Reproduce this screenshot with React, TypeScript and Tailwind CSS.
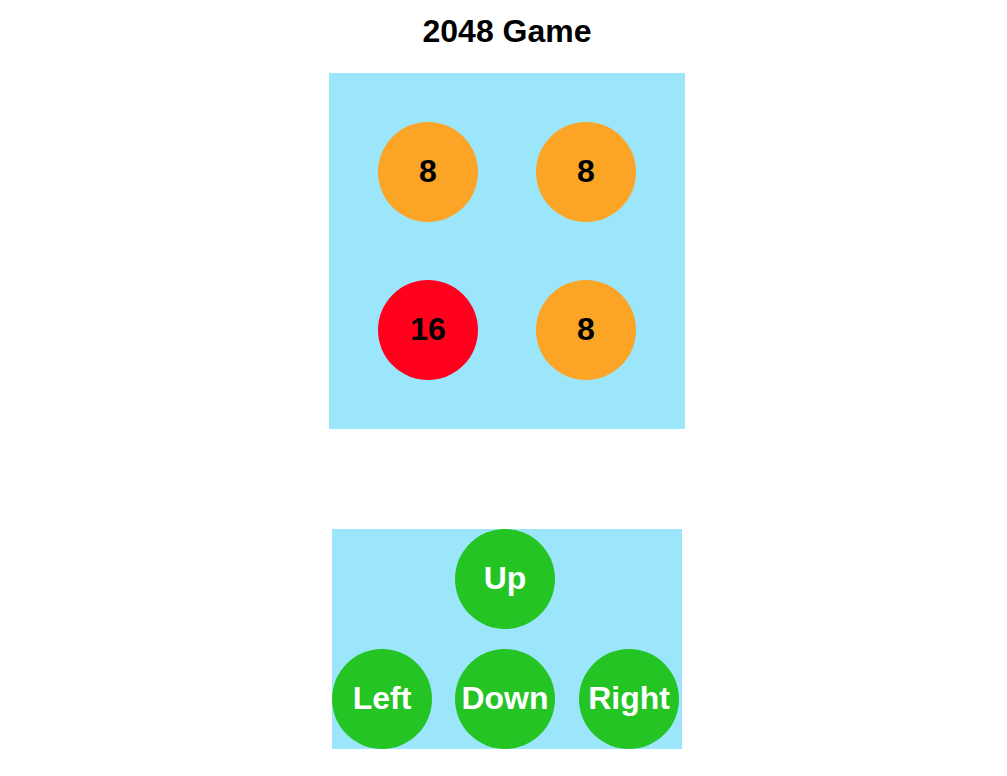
import React from "react";

const tiles = [
  { v: 8, c: "bg-[#fba426]" },
  { v: 8, c: "bg-[#fba426]" },
  { v: 16, c: "bg-[#ff001d]" },
  { v: 8, c: "bg-[#fba426]" },
];

function Btn({ label }: { label: string }) {
  return (
    <div className="w-[100px] h-[100px] rounded-full bg-[#23c423] flex items-center justify-center pb-[2px] text-white text-[32px] font-bold">
      {label}
    </div>
  );
}

export default function App() {
  return (
    <div
      className="w-[1007px] h-[776px] bg-white flex flex-col items-center pl-[7px]"
      style={{ fontFamily: '"Liberation Sans", Arial, sans-serif' }}
    >
      <h1 className="mt-[13px] h-[36px] leading-[36px] text-[32px] font-bold text-black">2048 Game</h1>
      <div className="mt-[24px] w-[356px] h-[356px] bg-[#9ce6fc] grid grid-cols-2 grid-rows-2 p-[49px] gap-[58px]">
        {tiles.map((t, i) => (
          <div
            key={i}
            className={`w-[100px] h-[100px] rounded-full ${t.c} flex items-center justify-center pb-[2px] text-black text-[32px] font-bold`}
          >
            {t.v}
          </div>
        ))}
      </div>
      <div className="mt-[100px] w-[350px] h-[220px] bg-[#9ce6fc] flex flex-col gap-[20px]">
        <div className="flex pl-[123px]">
          <Btn label="Up" />
        </div>
        <div className="flex">
          <Btn label="Left" />
          <div className="ml-[23px]">
            <Btn label="Down" />
          </div>
          <div className="ml-[24px]">
            <Btn label="Right" />
          </div>
        </div>
      </div>
    </div>
  );
}
